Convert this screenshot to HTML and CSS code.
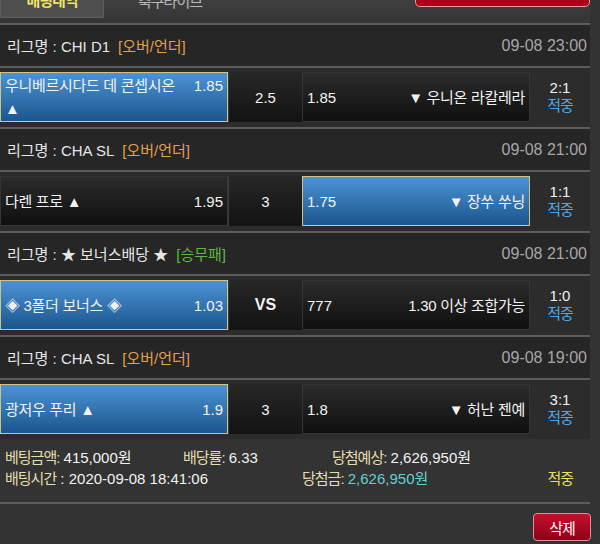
FILE: index.html
```html
<!DOCTYPE html>
<html lang="ko">
<head>
<meta charset="utf-8">
<title>배팅내역</title>
<link rel="stylesheet" href="styles.css">
</head>
<body>
<div class="page">
  <div class="topbar">
    <div class="tab active">배팅내역</div>
    <div class="tab plain">축구라이브</div>
    <div class="topbtn"></div>
  </div>

  <div class="game">
    <div class="league"><span>리그명 : CHI D1</span><span class="ltype ou">[오버/언더]</span><span class="ldate">09-08 23:00</span></div>
    <div class="match">
      <div class="team home sel"><span class="tname">우니베르시다드 데 콘셉시온 ▲</span><span class="odd">1.85</span></div>
      <div class="mid">2.5</div>
      <div class="team away"><span class="odd">1.85</span><span class="tname">▼ 우니온 라칼레라</span></div>
      <div class="result"><span>2:1</span><span class="hit">적중</span></div>
    </div>
  </div>

  <div class="game">
    <div class="league"><span>리그명 : CHA SL</span><span class="ltype ou">[오버/언더]</span><span class="ldate">09-08 21:00</span></div>
    <div class="match">
      <div class="team home"><span class="tname">다렌 프로 ▲</span><span class="odd">1.95</span></div>
      <div class="mid">3</div>
      <div class="team away sel"><span class="odd">1.75</span><span class="tname">▼ 장쑤 쑤닝</span></div>
      <div class="result"><span>1:1</span><span class="hit">적중</span></div>
    </div>
  </div>

  <div class="game">
    <div class="league"><span>리그명 : ★ 보너스배당 ★</span><span class="ltype wdl">[승무패]</span><span class="ldate">09-08 21:00</span></div>
    <div class="match">
      <div class="team home sel"><span class="tname">◈ 3폴더 보너스 ◈</span><span class="odd">1.03</span></div>
      <div class="mid vs">VS</div>
      <div class="team away"><span class="odd">777</span><span class="tname">1.30 이상 조합가능</span></div>
      <div class="result"><span>1:0</span><span class="hit">적중</span></div>
    </div>
  </div>

  <div class="game">
    <div class="league"><span>리그명 : CHA SL</span><span class="ltype ou">[오버/언더]</span><span class="ldate">09-08 19:00</span></div>
    <div class="match">
      <div class="team home sel"><span class="tname">광저우 푸리 ▲</span><span class="odd">1.9</span></div>
      <div class="mid">3</div>
      <div class="team away"><span class="odd">1.8</span><span class="tname">▼ 허난 젠예</span></div>
      <div class="result"><span>3:1</span><span class="hit">적중</span></div>
    </div>
  </div>

  <div class="summary">
    <div class="sline">
      <span class="s1"><span class="lbl">베팅금액:</span> 415,000원</span>
      <span class="s2"><span class="lbl">배당률:</span> 6.33</span>
      <span class="s3"><span class="lbl">당첨예상:</span> 2,626,950원</span>
    </div>
    <div class="sline">
      <span class="s1 wide"><span class="lbl">배팅시간</span> : 2020-09-08 18:41:06</span>
      <span class="s2 grow"><span class="lbl">당첨금:</span> <span class="win">2,626,950원</span></span>
      <span class="state">적중</span>
    </div>
  </div>

  <div class="actions">
    <div class="del">삭제</div>
  </div>
</div>
</body>
</html>
```

FILE: styles.css
```css
body {
  margin: 0;
  background: #333333;
  font-family: "Liberation Sans", "Noto Sans CJK KR", sans-serif;
  font-size: 15px;
  color: #eeeeee;
}

.page {
  width: 590px;
}

/* top tabs */
.topbar {
  height: 23px;
  display: flex;
  align-items: flex-end;
  overflow: hidden;
  background: linear-gradient(#3f3f3f, #353535);
}

.tab {
  height: 36px;
  margin-bottom: 5px;
  display: flex;
  align-items: center;
  justify-content: center;
  box-sizing: border-box;
  letter-spacing: -1px;
}

.tab.active {
  width: 104px;
  background: #4f4f4f;
  border: 1px solid #5e5e5e;
  border-top: 0;
  color: #f0e468;
  font-weight: bold;
}

.tab.plain {
  margin-left: 34px;
  color: #b8b8b8;
}

.topbtn {
  margin-left: auto;
  width: 175px;
  height: 30px;
  margin-bottom: 16px;
  box-sizing: border-box;
  background: #ad0019;
  border: 1px solid #e79aa4;
  border-radius: 5px;
}

/* league header */
.league {
  height: 41px;
  border-top: 2px solid #5d5d5d;
  background: #262626;
  display: flex;
  align-items: center;
  padding: 0 3px 0 7px;
  color: #e6e6e6;
}

.ltype {
  margin-left: 8px;
}

.ou {
  color: #e2a04c;
}

.wdl {
  color: #5fb83e;
}

.ldate {
  margin-left: auto;
  color: #a6a6a6;
  font-size: 16px;
}

/* match row */
.match {
  border-top: 2px solid #5d5d5d;
  background: #2c2c2c;
  padding: 4px 0 5px;
  display: flex;
  height: 50px;
}

.team {
  width: 228px;
  height: 50px;
  box-sizing: border-box;
  border: 1px solid #353535;
  background: linear-gradient(#2c2c2c, #0f0f0f);
  display: flex;
  flex-wrap: wrap;
  align-content: center;
  align-items: baseline;
  gap: 0 10px;
  padding: 0 4px;
  line-height: 23px;
  color: #f2f2f2;
}

.team.sel {
  background: linear-gradient(#4c93d4, #1b568f);
  border-color: #d3c283;
}

.tname {
  flex: 1 1 0;
  min-width: 0;
  letter-spacing: -0.3px;
  word-break: keep-all;
}

.away .tname {
  text-align: right;
}

.odd {
  flex: none;
}

.mid {
  width: 74px;
  height: 50px;
  box-sizing: border-box;
  display: flex;
  align-items: center;
  justify-content: center;
  background: linear-gradient(#272727, #131313);
  border-left: 1px solid #3e3e3e;
  color: #f2f2f2;
}

.mid.vs {
  font-weight: bold;
  font-size: 16px;
}

.result {
  flex: 1;
  display: flex;
  flex-direction: column;
  align-items: center;
  justify-content: center;
  line-height: 18px;
  color: #f0f0f0;
}

.hit {
  color: #55a5e2;
  letter-spacing: -1px;
}

/* summary */
.summary {
  padding: 8px 0 13px 5px;
  line-height: 21px;
  border-bottom: 2px solid #5d5d5d;
  color: #f2f2f2;
}

.sline {
  display: flex;
}

.s1 {
  width: 178px;
}

.s1.wide {
  width: 297px;
}

.s2 {
  width: 149px;
}

.s2.grow {
  width: auto;
  flex: 1;
}

.lbl {
  color: #e3deac;
  letter-spacing: -1px;
}

.win {
  color: #62d2cf;
}

.state {
  color: #e8e05a;
  padding-right: 17px;
  letter-spacing: -1px;
}

/* actions */
.actions {
  display: flex;
  justify-content: flex-end;
  padding-top: 9px;
}

.del {
  width: 58px;
  height: 28px;
  box-sizing: border-box;
  margin-right: -1px;
  display: flex;
  align-items: center;
  justify-content: center;
  background: linear-gradient(#c4102c, #8e0018);
  border: 1px solid #e38b98;
  border-radius: 4px;
  color: #ffffff;
  letter-spacing: -1px;
}
```
